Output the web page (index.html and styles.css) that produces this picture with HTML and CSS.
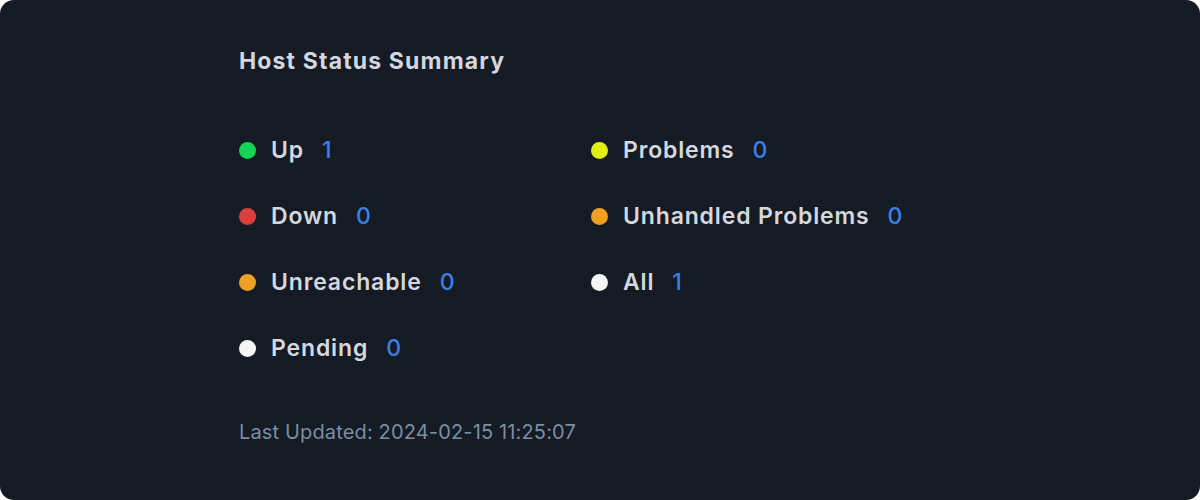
FILE: index.html
```html
<!DOCTYPE html>
<html lang="en">
<head>
<meta charset="utf-8">
<title>Host Status Summary</title>
<link rel="stylesheet" href="styles.css">
</head>
<body>
<div class="card">
  <h2 class="title">Host Status Summary</h2>
  <div class="grid">
    <div class="item"><span class="dot green"></span><span class="label">Up</span><span class="count">1</span></div>
    <div class="item"><span class="dot yellow"></span><span class="label">Problems</span><span class="count">0</span></div>
    <div class="item"><span class="dot red"></span><span class="label">Down</span><span class="count">0</span></div>
    <div class="item"><span class="dot orange"></span><span class="label">Unhandled Problems</span><span class="count">0</span></div>
    <div class="item"><span class="dot orange"></span><span class="label">Unreachable</span><span class="count">0</span></div>
    <div class="item"><span class="dot white"></span><span class="label">All</span><span class="count">1</span></div>
    <div class="item"><span class="dot white"></span><span class="label">Pending</span><span class="count">0</span></div>
  </div>
  <p class="updated">Last Updated: 2024-02-15 11:25:07</p>
</div>
</body>
</html>
```
FILE: styles.css
```css
html, body {
  margin: 0;
  padding: 0;
  background: #ffffff;
}
body {
  font-family: Inter, "Liberation Sans", sans-serif;
}
.card {
  box-sizing: border-box;
  width: 1200px;
  height: 500px;
  background: #141b25;
  border-radius: 14px;
  padding: 46px 0 0 239px;
}
.title {
  margin: 0;
  font-size: 23px;
  line-height: 30px;
  font-weight: 700;
  color: #d3d6dc;
  letter-spacing: 1.15px;
}
.grid {
  display: grid;
  grid-template-columns: 352px auto;
  grid-auto-rows: 66px;
  margin-top: 58px;
}
.item {
  display: flex;
  align-items: center;
  height: 32px;
}
.dot {
  width: 17px;
  height: 17px;
  border-radius: 50%;
  flex: none;
  margin-right: 15px;
}
.green { background: #14d552; }
.red { background: #dc3e3e; }
.orange { background: #f0a020; }
.yellow { background: #e3ef14; }
.white { background: #f5f5f5; }
.label {
  font-size: 23px;
  font-weight: 600;
  color: #d4d8de;
  letter-spacing: 0.85px;
}
.count {
  font-size: 23px;
  font-weight: 500;
  color: #3d7fe6;
  margin-left: 18px;
}
.updated {
  margin: 0;
  margin-top: 20px;
  font-size: 20px;
  line-height: 28px;
  color: #7e8ca2;
  letter-spacing: 0.15px;
}
```
